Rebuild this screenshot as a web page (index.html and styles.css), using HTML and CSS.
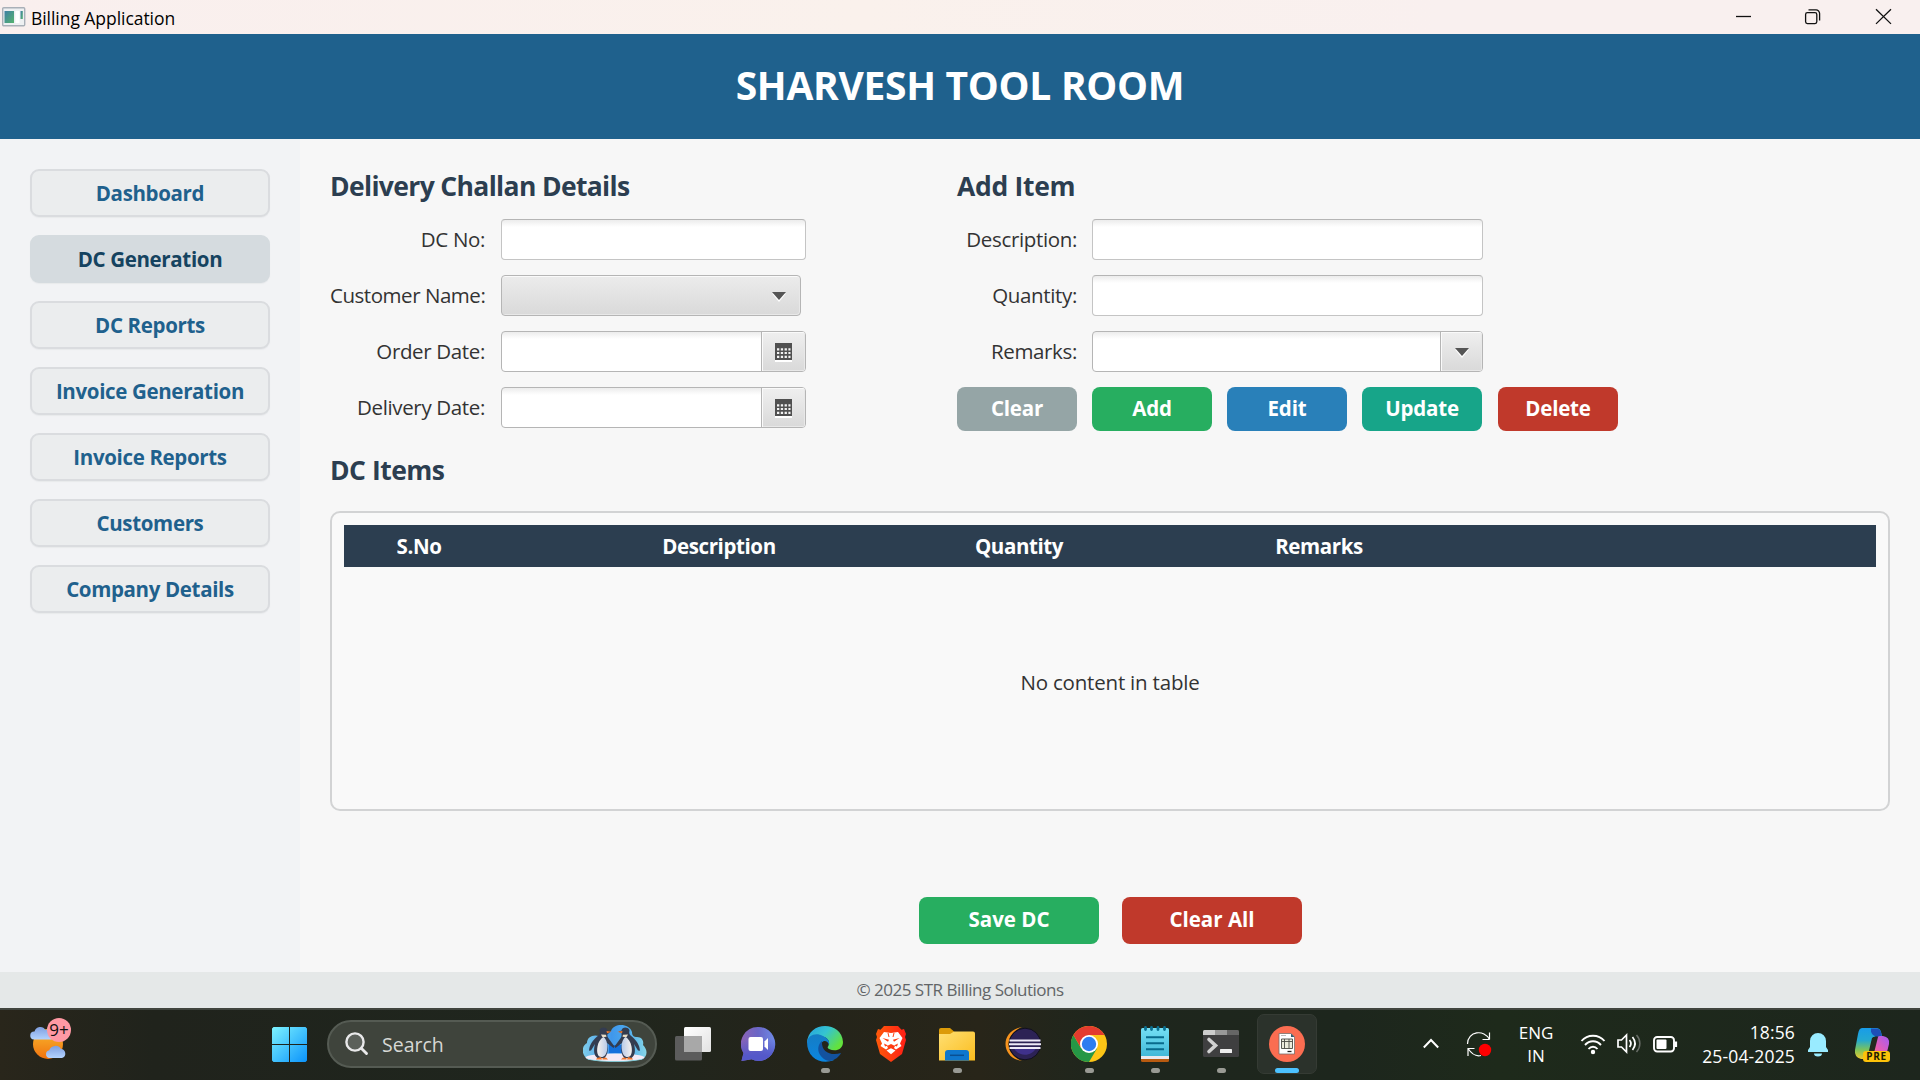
FILE: index.html
```html
<!DOCTYPE html>
<html lang="en">
<head>
<meta charset="utf-8">
<title>Billing Application</title>
<link rel="stylesheet" href="styles.css">
</head>
<body>
<div class="titlebar">
  <svg width="24" height="20" viewBox="0 0 24 20"><defs><linearGradient id="ti" x1="0" y1="0" x2="1" y2="1"><stop offset="0" stop-color="#3f7fa5"/><stop offset="1" stop-color="#55b36e"/></linearGradient></defs><rect x=".7" y=".7" width="22" height="18" rx="1" fill="#eef0f2" stroke="#a9b0b8" stroke-width="1.4"/><rect x="2.5" y="4" width="9.5" height="12" fill="url(#ti)"/><rect x="13.5" y="4" width="4" height="12" fill="#fff"/><rect x="18.5" y="4" width="2.3" height="8" fill="url(#ti)"/></svg>
  <span class="window-title">Billing Application</span>
  <svg class="window-controls" width="192" height="34" viewBox="0 0 192 34" fill="none" stroke="#111" stroke-width="1.3"><path d="M8 16.5h15"/><rect x="77.6" y="12.6" width="11.2" height="11" rx="1.8"/><path d="M80.5 9.9h7.5a3.6 3.6 0 0 1 3.6 3.6v7"/><path d="M148 9.3l15 14.6M163 9.3l-15 14.6"/></svg>
</div>

<header class="banner"><h1>SHARVESH TOOL ROOM</h1></header>

<div class="body">
  <nav class="sidebar">
    <button class="nav-btn">Dashboard</button>
    <button class="nav-btn active">DC Generation</button>
    <button class="nav-btn">DC Reports</button>
    <button class="nav-btn">Invoice Generation</button>
    <button class="nav-btn">Invoice Reports</button>
    <button class="nav-btn">Customers</button>
    <button class="nav-btn">Company Details</button>
  </nav>

  <main class="content">
    <div class="forms">
      <section class="form challan">
        <h2>Delivery Challan Details</h2>
        <div class="fields">
          <label>DC No:</label>
          <div class="field"></div>
          <label class="long">Customer Name:</label>
          <div class="combo"><svg width="14" height="10"><path d="M0 1.5h14L7 10z" fill="#fff"/><path d="M0 0h14L7 8z" fill="#555"/></svg></div>
          <label>Order Date:</label>
          <div class="field split"><div class="drop date"><svg width="17" height="19" viewBox="0 0 17 19"><path d="M0 1h17v18H0z" fill="#fff"/><path d="M0 0h17v17H0z" fill="#505050"/><path d="M2 6.3h13.5M2 10h13.5M2 13.8h13.5" stroke="#f2f2f2" stroke-width="2.2" stroke-dasharray="2.3 1.5"/></svg></div></div>
          <label>Delivery Date:</label>
          <div class="field split"><div class="drop date"><svg width="17" height="19" viewBox="0 0 17 19"><path d="M0 1h17v18H0z" fill="#fff"/><path d="M0 0h17v17H0z" fill="#505050"/><path d="M2 6.3h13.5M2 10h13.5M2 13.8h13.5" stroke="#f2f2f2" stroke-width="2.2" stroke-dasharray="2.3 1.5"/></svg></div></div>
        </div>
      </section>
      <section class="form item">
        <h2>Add Item</h2>
        <div class="fields">
          <label>Description:</label>
          <div class="field"></div>
          <label>Quantity:</label>
          <div class="field"></div>
          <label>Remarks:</label>
          <div class="field split"><div class="drop"><svg width="14" height="10"><path d="M0 1.5h14L7 10z" fill="#fff"/><path d="M0 0h14L7 8z" fill="#555"/></svg></div></div>
        </div>
        <div class="actions">
          <button class="btn gray">Clear</button>
          <button class="btn green">Add</button>
          <button class="btn blue">Edit</button>
          <button class="btn teal">Update</button>
          <button class="btn red">Delete</button>
        </div>
      </section>
    </div>

    <h2 class="items-title">DC Items</h2>
    <section class="table">
      <div class="thead">
        <span class="col">S.No</span>
        <span class="col wide">Description</span>
        <span class="col">Quantity</span>
        <span class="col wide">Remarks</span>
      </div>
      <div class="empty">No content in table</div>
    </section>

    <div class="submit">
      <button class="btn green">Save DC</button>
      <button class="btn red">Clear All</button>
    </div>
  </main>
</div>

<footer class="footer">© 2025 STR Billing Solutions</footer>

<div class="taskbar">
  <div class="weather">
    <svg width="48" height="72" viewBox="26 1008 48 72">
      <defs>
        <linearGradient id="sun" x1="0" y1="0" x2="0" y2="1"><stop offset="0" stop-color="#f9b92e"/><stop offset="1" stop-color="#f0720f"/></linearGradient>
        <linearGradient id="cl" x1="0" y1="0" x2="0" y2="1"><stop offset="0" stop-color="#7f9fe0"/><stop offset="1" stop-color="#b3d3ff"/></linearGradient>
      </defs>
      <circle cx="48" cy="1044" r="15" fill="url(#sun)"/>
      <path d="M34 1039.500a4 4 0 0 1 .5-8 6 6 0 0 1 11-1.500 5 5 0 0 1 6 9.500z" fill="url(#cl)"/>
      <path d="M49 1058a4 4 0 0 1 .3-7.800 6.500 6.500 0 0 1 11.700-1.200 4.600 4.600 0 0 1 1 9z" fill="url(#cl)"/>
    </svg>
    <span class="badge">9+</span>
  </div>

  <svg class="start" width="36" height="72" viewBox="0 0 36 72"><defs><linearGradient id="win" x1="0" y1="19" x2="35" y2="54" gradientUnits="userSpaceOnUse"><stop offset="0" stop-color="#7df3ff"/><stop offset="1" stop-color="#0b93fb"/></linearGradient></defs><path d="M1.500 19H17v17H0V20.500zM18 19h15.500l1.500 1.500V36H18zM0 37h17v17H1.500L0 52.500zM18 37h17v15.500L33.500 54H18z" fill="url(#win)"/></svg>

  <div class="search">
    <svg width="24" height="24" viewBox="0 0 24 24" fill="none" stroke="#e9e9ea" stroke-linecap="round"><circle cx="10" cy="10" r="8.600" stroke-width="2.400" fill="#5b605a"/><path d="M16.500 16.500l5 5" stroke-width="2.900"/></svg>
    <span class="search-text">Search</span>
    <svg class="penguins" width="64" height="38" viewBox="0 0 64 38">
      <defs>
        <linearGradient id="ice" x1="0" y1="0" x2="1" y2="0"><stop offset="0" stop-color="#7fcdea"/><stop offset=".45" stop-color="#3f97ec"/><stop offset=".7" stop-color="#4ca9ee"/><stop offset="1" stop-color="#86d6e6"/></linearGradient>
        <linearGradient id="belly" x1="0" y1="0" x2="1" y2="0"><stop offset="0" stop-color="#f6f1ee"/><stop offset="1" stop-color="#b9cbe8"/></linearGradient>
      </defs>
      <path d="M6 35C-2 31-2 21 4 18c0-6 6-9 12-7 4 1 9-1 12-5 3-8 18-8 21 1 0 4 2 5 5 5 5 0 7 4 6 8 5 5 5 12-2 15z" fill="url(#ice)"/>
      <path d="M26 20h13v8H26z" fill="#1471dc"/>
      <ellipse cx="32" cy="32.500" rx="29.500" ry="4" fill="#f3eaf5"/>
      <path d="M3 33.500c14 3.500 44 3.500 58 0-6 4.500-52 4.500-58 0z" fill="#7ad0de"/>
      <g id="penguin">
        <path d="M16.500 5c2-3.500 7.500-3 8 .5l3 1.200-3 1.300c0 2-.5 3 .8 5l6.200 8.500-1 1.500-6.500-5c1.500 7 .5 12-2.500 15h-7c-4-3-4-8-2.500-14l-4 6.500-2 .2c.5-5.700 3-9 6-12.200 2-2 4.700-3.500 4.800-5.500z" fill="#343c50"/>
        <path d="M20.500 12c3.500 2.500 4.500 8 3.500 13.500-.7 4-2.500 6.500-5.500 6.500-4 0-5-5-4-10.500.8-4.500 3-8 6-9.500z" fill="url(#belly)"/>
        <path d="M18 9.500l5 .3.500 2-4 .5z" fill="#e9dcc6"/>
        <path d="M23.500 6l5 .8-4.500 1.400zM14 33l4-1 1 2.500h-6zM19.500 33l3.500-.5 2 2h-5.500z" fill="#f0772c"/>
      </g>
      <use href="#penguin" transform="matrix(-1 0 0 1 63 0)"/>
    </svg>
  </div>

  <div class="apps">
    <div class="app">
      <svg width="36" height="36" viewBox="0 0 36 36"><defs><linearGradient id="tv" x1="0" y1="0" x2="1" y2="1"><stop offset="0" stop-color="#fff"/><stop offset="1" stop-color="#e2e2e2"/></linearGradient></defs><rect x="9" y="1" width="27" height="25" rx="1.500" fill="url(#tv)"/><rect x="0" y="10" width="27" height="24.500" rx="1.500" fill="#5c5c5c"/><path d="M9 10h18v16H9z" fill="#a8a8a8"/></svg>
    </div>
    <div class="app">
      <svg width="36" height="36" viewBox="0 0 36 36"><defs><linearGradient id="ch" x1="0" y1="0" x2="1" y2="0"><stop offset="0" stop-color="#8d63b5"/><stop offset=".5" stop-color="#6a66c6"/><stop offset="1" stop-color="#6f8be8"/></linearGradient><linearGradient id="ch2" x1="0" y1="0" x2="0" y2="1"><stop offset=".35" stop-color="#5458c9" stop-opacity="0"/><stop offset=".85" stop-color="#5458c9"/></linearGradient></defs><path id="bubble" d="M17.500 1a16.500 17 0 1 1-7 32.300L.5 35l2-8A17 17 0 0 1 17.500 1z" fill="url(#ch)"/><path d="M17.500 1a16.500 17 0 1 1-7 32.300L.5 35l2-8A17 17 0 0 1 17.500 1z" fill="url(#ch2)"/><rect x="7.500" y="11" width="14.500" height="14" rx="2" fill="#fff"/><path d="M23.500 15.500l3.500-3.500v12l-3.500-3.500z" fill="#fff"/></svg>
    </div>
    <div class="app running">
      <svg width="36" height="36" viewBox="0 0 36 36"><defs><linearGradient id="ed" x1="0" y1="0" x2="1" y2=".6"><stop offset="0" stop-color="#249ee0"/><stop offset=".5" stop-color="#35c4d0"/><stop offset="1" stop-color="#63e23c"/></linearGradient><linearGradient id="ed2" x1="0" y1="0" x2="0" y2="1"><stop offset="0" stop-color="#157cc4"/><stop offset="1" stop-color="#0b86e0"/></linearGradient></defs><path d="M0 17C1-6 35-5 36 16c0 8-8 10-14 7-3-2 0-2 0-6 0-7-12-10-22 0z" fill="url(#ed)"/><path d="M0 16C1 9 9 6 16 10c5 2 7 6 6 9-1-5-8-6-8 1 0 7 5 12 13 14-12 5-27-1-27-18z" fill="url(#ed2)"/><path d="M15 15c-8 7-2 19 8 20 5-1 9-4 11-8-9 3-20 0-19-12z" fill="#13529f"/></svg>
    </div>
    <div class="app">
      <svg width="36" height="36" viewBox="0 0 36 36"><defs><linearGradient id="br" x1="0" x2="1"><stop offset="0" stop-color="#ff5a0a"/><stop offset="1" stop-color="#ff1e16"/></linearGradient></defs><path d="M11 0h14l3.500 3.800L31 3l2 5-1 3 1 3-4 14-11 8-11-8L3 14l1-3-1-3 2-5 2.500.8z" fill="url(#br)"/><path d="M11 6l7 1 7-1 4.500 6-2.500 5.500 1.500 2.500-5.500 3.500-2-1.500 1-2-4-2-4 2 1 2-2 1.500L7.500 20 9 17.500 6.500 12z" fill="#fff"/><path d="M13.500 24.500l4.500-2.300 4.500 2.300-4.500 3.700z" fill="#fff"/><path d="M9.500 12l6.500 1.800-1 2zM26.500 12L20 13.800l1 2zM14.500 7h1l1 4h-1zM21.500 7h-1l-1 4h1zM16.500 19.500h3L18 22zM11 17.500l4 2-3 1zM25 17.500l-4 2 3 1z" fill="#ff3f12"/></svg>
    </div>
    <div class="app running">
      <svg width="36" height="36" viewBox="0 0 36 36"><defs><linearGradient id="fo" x1="0" y1="0" x2="1" y2="1"><stop offset="0" stop-color="#ffdf73"/><stop offset="1" stop-color="#fbbd1e"/></linearGradient></defs><path d="M0 4q0-2 2-2h9l4 3.500L13 12H0z" fill="#dc9b09"/><path d="M0 8h11l4-2.500h19q2 0 2 2V34.500H0z" fill="url(#fo)"/><path d="M6 34.500V27q0-3 3-3h18q3 0 3 3v7.500z" fill="#0f77cd"/><path d="M11 29.300h14" stroke="#0a4f92" stroke-width="1.500"/></svg>
    </div>
    <div class="app">
      <svg width="36" height="36" viewBox="0 0 36 36"><path d="M17 1C-5 4-5 32 17 35-2 27 0 8 17 1z" fill="#f7941e"/><circle cx="20" cy="18" r="15.800" fill="#2c2255" stroke="#11101c" stroke-width="1"/><path d="M9 22h22c-4 9-18 9-22 0z" fill="#3f318b"/><path d="M4.500 14.500h31M4 18.200h32M4.500 22h31" stroke="#eeeaf8" stroke-width="2"/></svg>
    </div>
    <div class="app running">
      <svg width="36" height="36" viewBox="0 0 36 36"><circle cx="18" cy="18" r="18" fill="#fcc516"/><path d="M2.400 9A18 18 0 0 0 18 36l8-13.500-16-.5z" fill="#259746"/><path d="M2.400 9A18 18 0 0 1 33.600 9H18L9.500 21z" fill="#e33b2e"/><circle cx="18" cy="18" r="9" fill="#fff"/><circle cx="18" cy="18" r="7.200" fill="#2d7df0"/></svg>
    </div>
    <div class="app running">
      <svg width="36" height="36" viewBox="0 0 36 36"><defs><linearGradient id="np" x1="0" y1="0" x2="0" y2="1"><stop offset="0" stop-color="#74dff5"/><stop offset="1" stop-color="#42b9d8"/></linearGradient></defs><rect x="4" y="28" width="28" height="8" rx="1.500" fill="#b85a10"/><path d="M4 27h28v6H4z" fill="#e9e9ee"/><path d="M4 3.500q0-1.500 1.500-1.500h25q1.500 0 1.500 1.500V30H4z" fill="url(#np)"/><path d="M9 11.200h18M9 17.200h18M9 23.200h18" stroke="#086a8c" stroke-width="2"/><path d="M8.500 1.500v2M14.500 1.500v2M21 1.500v2M27.500 1.500v2" stroke="#0b6f90" stroke-width="2.800" stroke-linecap="round"/></svg>
    </div>
    <div class="app running">
      <svg width="36" height="36" viewBox="0 0 36 36"><rect y="4" width="36" height="27" rx="1.500" fill="#3f3f40"/><path d="M0 9V5.500Q0 4 1.500 4H12v5z" fill="#cdcdcd"/><path d="M12 4h12v5H12z" fill="#999"/><path d="M24 4h10.500Q36 4 36 5.500V9H24z" fill="#666"/><path d="M6 13.500l6.500 6L6 25.500" fill="none" stroke="#d0d0d0" stroke-width="3.600" stroke-linecap="round"/><rect x="17" y="23" width="12" height="4" rx=".6" fill="#eee"/></svg>
    </div>
    <div class="app running current">
      <svg width="36" height="36" viewBox="0 0 36 36"><circle cx="18" cy="18" r="18" fill="#fb6d51"/><path d="M10 7.500h12L25.500 11v17H10z" fill="#fff" stroke="#77706c" stroke-width=".8"/><path d="M22 7.500l3.500 3.500H22z" fill="#2f5f72"/><path d="M12 9.500h5" stroke="#bbb" stroke-width="1"/><path d="M12.500 13h11v9.500h-11zM15.500 13v9.500M20 13v9.500M12.500 15.500h11" stroke="#4a4a44" stroke-width=".9" fill="#ecebdc"/><path d="M18.500 25.500h4" stroke="#222" stroke-width="1.300"/></svg>
    </div>
  </div>

  <div class="tray">
    <svg class="tray-icons" width="80" height="72" viewBox="1420 1008 80 72" fill="none" stroke="#fff"><path d="M1423.800 1047.500l7.200-7.500 7.200 7.500" stroke-width="2"/><path d="M1467.500 1044c0-13 17-15 22-4.500v-7M1489.500 1039.500h-7M1468 1056v-7.500h6.500M1468 1048.500c4 6 9 8 13 7" stroke-width="1.200"/><circle cx="1485" cy="1050" r="6.200" fill="#f00" stroke="none"/></svg>
    <div class="lang"><span>ENG</span><span>IN</span></div>
    <svg class="status" width="100" height="72" viewBox="1580 1008 100 72" fill="none" stroke="#fff" stroke-width="1.900"><path d="M1581.500 1041c6-7 17-7 23 0M1585 1045c4.500-5 11.500-5 16 0M1588.500 1049c2.500-3 6.500-3 9 0"/><circle cx="1593" cy="1052" r="2.200" fill="#fff" stroke="none"/><path d="M1618 1040h3.500l5-5v17l-5-5h-3.500zM1629.500 1040c1.600 2 1.600 5 0 7M1632.500 1037c3.200 4 3.200 9 0 13" stroke-width="1.700"/><path d="M1636.500 1035c4.500 5 4.500 12 0 17" stroke="#686d67" stroke-width="1.500"/><rect x="1654" y="1037" width="20" height="14.500" rx="3.200"/><rect x="1656.500" y="1039.500" width="10" height="9.500" rx="1" fill="#fff" stroke="none"/><path d="M1675.800 1041.500v5.500" stroke-width="2.600"/></svg>
    <div class="clock"><span>18:56</span><span>25-04-2025</span></div>
    <svg class="bell" width="22" height="72" viewBox="1807 1008 22 72" fill="#99ebff"><path d="M1808 1052v-2l2-3v-6a8 8 0 0 1 16 0v6l2 3v2zM1814 1053.500h8a4 3 0 0 1-8 0z"/></svg>
    <div class="copilot">
      <svg width="36" height="72" viewBox="1854 1008 36 72"><defs><linearGradient id="c1" x1="0" y1="0" x2="0" y2="1"><stop offset="0" stop-color="#189ce9"/><stop offset=".4" stop-color="#25a9cf"/><stop offset=".7" stop-color="#7cc35a"/><stop offset="1" stop-color="#f1c82c"/></linearGradient><linearGradient id="c2" x1="1" y1="0" x2="0" y2="1"><stop offset="0" stop-color="#a35cf4"/><stop offset=".5" stop-color="#e65db5"/><stop offset="1" stop-color="#ff8a50"/></linearGradient></defs><path d="M1862 1028h14q4 0 5 4l1 4h-6l-4 2-4 17q-1 4-5 4h-2q-7-2-6-9l3-16q1-6 4-6z" fill="url(#c1)"/><path d="M1871 1028.500h5q4 0 5 4l1 4h-6q-4-1-5-5z" fill="#1e4fb8"/><path d="M1880 1036h3q7 1 6 8l-3 12q-1 4-5 4h-14q4-1 5-5l4-15q1-4 4-4z" fill="url(#c2)"/><path d="M1873 1037h5l-4 16h-5z" fill="#26291f"/></svg>
      <span class="pre">PRE</span>
    </div>
  </div>
</div>
</body>
</html>
```
FILE: styles.css
```css
* { box-sizing: border-box; }
body {
  margin: 0; width: 1920px; height: 1080px; overflow: hidden;
  display: flex; flex-direction: column;
  font-family: "Open Sans", "Noto Sans", sans-serif;
  font-size: 20.5px; letter-spacing: -0.35px; color: #333; background: #f7f7f7;
}
h1, h2 { margin: 0; font-weight: 700; }
button { font: inherit; letter-spacing: inherit; padding: 0; }
svg { flex: none; display: block; }

.titlebar {
  height: 34px; flex: none; display: flex; align-items: center; padding-left: 2px;
  background: linear-gradient(90deg, #f9efee, #faf1ec 45%, #f9f0ef 75%); color: #000; font-size: 17.5px; letter-spacing: -0.05px;
}
.window-title { margin-left: 5px; padding-top: 1px; }
.window-controls { margin-left: auto; }

.banner {
  height: 105px; flex: none; display: flex; align-items: center; justify-content: center;
  padding-bottom: 5px; background: #1f618d; color: #fff;
}
h1 { font-size: 39px; letter-spacing: -0.3px; }

.body { display: flex; flex: none; height: 833px; }
.sidebar {
  width: 300px; padding: 30px; display: flex; flex-direction: column; gap: 18px;
  background: #f2f3f5;
}
.nav-btn {
  height: 48px; flex: none; border: 2px solid #dadcdf; border-radius: 9px;
  background: #ebedee; color: #1f618d; font-weight: 700;
  box-shadow: 0 1px 1px #e8eaec;
}
.nav-btn.active { background: #d5dbdf; border-color: #d5dbdf; color: #154360; }

.content { flex: 1; padding: 30px 30px 0 30px; display: flex; flex-direction: column; }
.forms { display: flex; }
.challan { width: 627px; }
h2 { font-size: 26.5px; letter-spacing: -0.65px; line-height: 34px; padding-bottom: 2px; color: #2c3e50; }
.fields {
  display: grid; grid-template-columns: 155px 305px; gap: 15px 16px; margin-top: 14px;
}
.item h2 { letter-spacing: -0.3px; }
.item .fields { grid-template-columns: 120px 391px; column-gap: 15px; }
label { text-align: right; line-height: 41px; white-space: nowrap; }
label.long { letter-spacing: -0.46px; }
.field {
  height: 41px; border: 1px solid #c4c4c4; border-top-color: #b5b5b5; border-radius: 4px;
  background: linear-gradient(#ececec, #fff 7px); overflow: hidden;
}
.split { display: flex; justify-content: flex-end; border-color: #b5b5b5; }
.drop {
  width: 42px; display: flex; align-items: center; justify-content: center; padding-top: 2px;
  border-left: 1px solid #b5b5b5; background: linear-gradient(#efefef, #d9d9d9);
  box-shadow: inset 1px 1px #fafafa, inset -1px -1px #e8e8e8;
}
.drop.date { width: 44px; }
.combo {
  width: 300px; height: 41px; display: flex; align-items: center; justify-content: flex-end;
  padding: 2px 14px 0 0; border: 1px solid #b5b5b5; border-radius: 4px;
  background: linear-gradient(#ececec, #d9d9d9); box-shadow: inset 0 1px #fafafa, inset -1px -1px #e8e8e8;
}

.actions { display: flex; gap: 15px; margin-top: 15px; }
.btn {
  width: 120px; height: 44px; flex: none; padding-bottom: 2px; border: 0; border-radius: 8px;
  color: #fff; font-weight: 700; letter-spacing: -0.2px;
}
.actions .red { margin-left: 1px; }
.gray { background: #95a5a6; }
.green { background: #27ae60; }
.blue { background: #2980b9; }
.teal { background: #17a589; }
.red { background: #c0392b; }

.items-title { margin-top: 22px; letter-spacing: -0.5px; }
.table {
  height: 300px; margin-top: 22px; padding: 12px; display: flex; flex-direction: column;
  border: 2px solid #d2d3d4; border-radius: 10px; background: #f9f9f9;
}
.thead {
  height: 42px; flex: none; display: flex; align-items: center;
  background: #2c3e50; color: #fff; font-weight: 700; letter-spacing: -0.4px;
}
.col { width: 150px; text-align: center; }
.col.wide { width: 450px; }
.empty { flex: 1; display: flex; align-items: center; justify-content: center; letter-spacing: -0.2px; }
.submit { display: flex; justify-content: center; gap: 23px; margin-top: 86px; padding-left: 1px; }
.submit .btn { width: 180px; height: 47px; padding-bottom: 3px; letter-spacing: 0; }

.footer {
  height: 36px; flex: none; text-align: center; line-height: 35px;
  background: #e5e8e8; color: #626567; font-size: 17px; letter-spacing: -0.5px;
}

.taskbar {
  height: 72px; flex: none; display: flex; color: #fff; letter-spacing: 0;
  box-shadow: inset 0 2px #41453e;
  background: linear-gradient(90deg, #29261b, #20231c 8%, #1f261e 30%, #24241a 42%, #282519 51%, #1f261d 57%, #1d261d 70%, #1e2a1b 78%, #1d261d);
}
.weather { position: relative; margin-left: 26px; width: 48px; }
.badge {
  position: absolute; left: 21px; top: 10px; width: 24px; height: 24px; border-radius: 50%;
  background: #ff99a4; color: #111; font-size: 17px; line-height: 24px; text-align: center;
}
.start { margin-left: 198px; }
.search {
  width: 330px; height: 48px; margin: 12px 0 0 19px; padding: 0 10px 0 16px; flex: none;
  display: flex; align-items: center; border: 2px solid #555b53; border-radius: 24px; background: #3f443c;
}
.search-text { margin-left: 13px; font-size: 19.5px; color: #d6d8d5; }
.penguins { margin-left: auto; margin-right: -2px; }
.apps { display: flex; margin-left: 3px; }
.app {
  width: 66px; height: 72px; padding-top: 18px; display: flex; flex-direction: column;
  align-items: center;
}
.running::after {
  content: ""; width: 9px; height: 5px; margin-top: 6px; border-radius: 3px; background: #999a94;
}
.current {
  width: 60px; height: 60px; margin: 6px 3px 0; padding-top: 11px;
  border: 1px solid #353b34; border-radius: 7px; background: #2b322b;
}
.current::after { width: 24px; background: #4cc2ff; }
.tray { display: flex; flex: 1; }
.tray-icons { margin-left: 100px; }
.lang, .clock { display: flex; flex-direction: column; font-size: 17.5px; line-height: 24px; padding-top: 12px; }
.lang { width: 60px; margin-left: 6px; text-align: center; font-size: 17px; line-height: 23px; padding-top: 13px; }
.status { margin-left: 14px; }
.clock { width: 100px; margin-left: 15px; text-align: right; letter-spacing: 0.15px; }
.bell { margin-left: 12px; }
.copilot { position: relative; margin-left: 25px; }
.pre {
  position: absolute; left: 9px; top: 43px; width: 27px; height: 11px; border-radius: 3px;
  background: #fdc30a; color: #221b00; font-size: 10px; font-weight: 700; line-height: 11px;
  text-align: center; letter-spacing: 0.7px;
}
```
